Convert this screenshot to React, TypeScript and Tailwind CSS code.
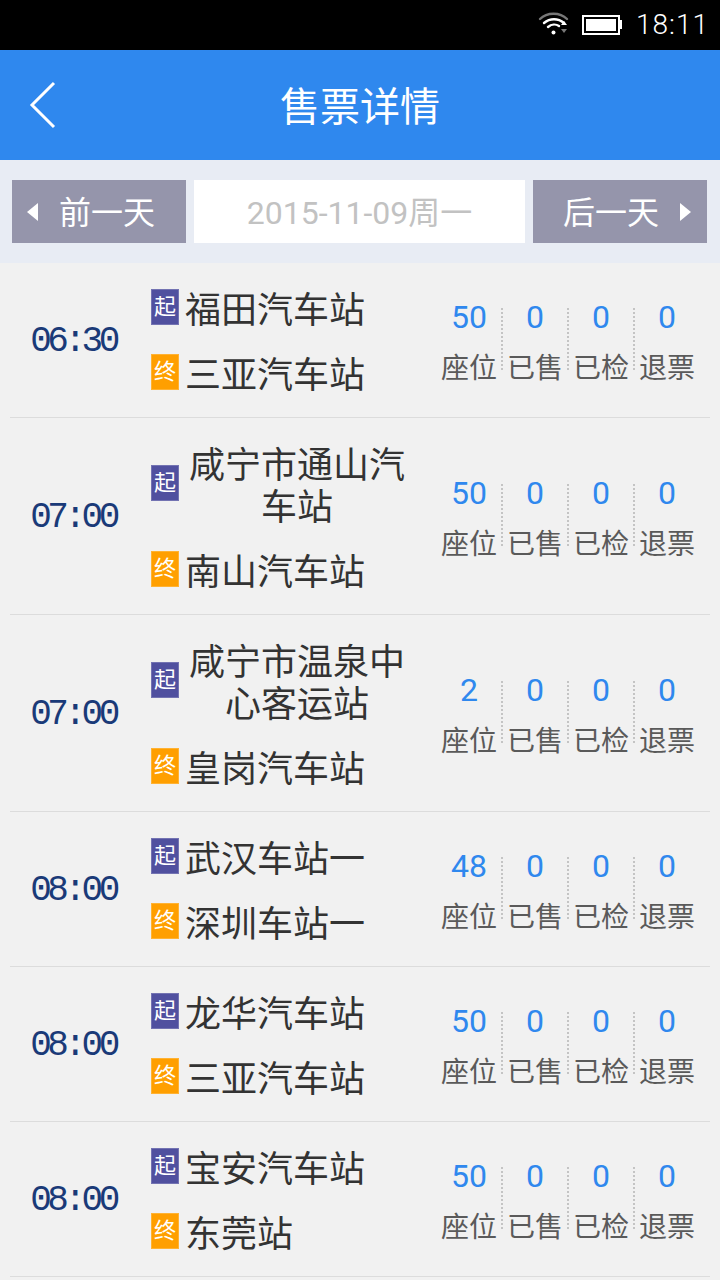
const font = { fontFamily: '"Roboto", "Noto Sans CJK SC", sans-serif' };

interface Trip {
  time: string;
  from: string;
  to: string;
  seats: number;
}

const trips: Trip[] = [
  { time: "06:30", from: "福田汽车站", to: "三亚汽车站", seats: 50 },
  { time: "07:00", from: "咸宁市通山汽车站", to: "南山汽车站", seats: 50 },
  { time: "07:00", from: "咸宁市温泉中心客运站", to: "皇岗汽车站", seats: 2 },
  { time: "08:00", from: "武汉车站一", to: "深圳车站一", seats: 48 },
  { time: "08:00", from: "龙华汽车站", to: "三亚汽车站", seats: 50 },
  { time: "08:00", from: "宝安汽车站", to: "东莞站", seats: 50 },
];

function StatusBar() {
  return (
    <div className="h-[50px] bg-black flex items-center justify-end pr-[11px] text-white">
      <svg width="32" height="26" viewBox="0 0 32 26" className="mr-[12px] mb-[2px]" fill="none" strokeLinecap="round">
        <path d="M2 8 C9 1 22 1 29 8" stroke="#777" strokeWidth="2.4" />
        <path d="M6 12 C12 7 20 7 26 12" stroke="#fff" strokeWidth="2.4" />
        <path d="M10 16 C13.5 13 18 13 21 15" stroke="#fff" strokeWidth="2.4" />
        <circle cx="15.5" cy="21.5" r="2" fill="#fff" />
        <path d="M23 14 l3 -4 l3 4 z" fill="#fff" />
        <path d="M23 18 l3 4 l3 -4 z" fill="#777" />
      </svg>
      <div className="w-[38px] h-[20px] border-2 border-white p-[2px] mb-[1px]">
        <div className="w-full h-full bg-white" />
      </div>
      <div className="w-[2px] h-[9px] bg-white mr-[14px] mb-[1px]" />
      <span className="text-[28px] leading-none font-light tracking-[1px]">18:11</span>
    </div>
  );
}

function Header() {
  return (
    <div className="h-[110px] bg-[#2f88ee] relative flex items-center justify-center">
      <svg width="28" height="48" viewBox="0 0 28 48" className="absolute left-[29px] top-[31px]" fill="none">
        <path d="M25 2 L3 24 L25 46" stroke="#fff" strokeWidth="3" />
      </svg>
      <span className="mt-[6px] text-[40px] leading-none text-white">售票详情</span>
    </div>
  );
}

function DateBar() {
  return (
    <div className="h-[103px] bg-[#e8ecf4] pt-[20px] pl-[12px] flex gap-[8px]">
      <div className="w-[174px] h-[63px] bg-[#9595ab] flex items-center text-white">
        <svg width="12" height="18" viewBox="0 0 12 18" className="ml-[14px]">
          <path d="M12 0 L1 9 L12 18 Z" fill="#fff" />
        </svg>
        <span className="ml-[21px] mt-[2px] text-[32px] leading-none">前一天</span>
      </div>
      <div className="w-[331px] h-[63px] bg-white flex items-center justify-center pt-[2px] text-[32px] leading-none text-[#c2c2c2]">
        2015-11-09周一
      </div>
      <div className="w-[174px] h-[63px] bg-[#9595ab] flex items-center text-white">
        <span className="ml-[30px] mt-[2px] text-[32px] leading-none">后一天</span>
        <svg width="12" height="18" viewBox="0 0 12 18" className="ml-[21px]">
          <path d="M0 0 L11 9 L0 18 Z" fill="#fff" />
        </svg>
      </div>
    </div>
  );
}

function Stop({ kind, name }: { kind: "from" | "to"; name: string }) {
  return (
    <div className="flex items-center">
      <div
        className={`w-[28px] h-[36px] -translate-y-[4px] flex items-center justify-center text-white text-[22px] leading-none border border-white/20 ${
          kind === "from" ? "bg-[#50509f]" : "bg-[#ff9f00]"
        }`}
      >
        {kind === "from" ? "起" : "终"}
      </div>
      <div className="ml-[6px] w-fit max-w-[224px] text-center text-[36px] leading-[42px] text-[#333]">{name}</div>
    </div>
  );
}

function Stat({ value, label, last }: { value: number; label: string; last?: boolean }) {
  return (
    <div className="relative w-[66px] flex flex-col items-center">
      <span className="text-[32px] leading-[38px] text-[#2f88ee]">{value}</span>
      <span className="mt-[14px] text-[28px] leading-[38px] whitespace-nowrap text-[#5a5a5a]">{label}</span>
      {!last && <div className="absolute -right-[1px] top-[10px] h-[62px] border-r-2 border-dotted border-[#c4c4c4]" />}
    </div>
  );
}

function TripRow({ trip }: { trip: Trip }) {
  return (
    <div className="mx-[10px] pt-[21px] pb-[20px] border-b border-[#dcdcdc] flex items-center">
      <div
        className="w-[130px] pr-[4px] pt-[2px] text-center text-[36px] leading-none tracking-[-4.5px] text-[#1a3a78]"
        style={{ fontFamily: '"Liberation Mono", monospace' }}
      >
        {trip.time}
      </div>
      <div className="ml-[11px] mt-[6px] w-[285px] flex flex-col gap-[23px]">
        <Stop kind="from" name={trip.from} />
        <Stop kind="to" name={trip.to} />
      </div>
      <div className="mt-[5px] flex">
        <Stat value={trip.seats} label="座位" />
        <Stat value={0} label="已售" />
        <Stat value={0} label="已检" />
        <Stat value={0} label="退票" last />
      </div>
    </div>
  );
}

export default function App() {
  return (
    <div className="w-[720px] h-[1280px] overflow-hidden bg-[#f1f1f1]" style={font}>
      <StatusBar />
      <Header />
      <DateBar />
      {trips.map((trip, i) => (
        <TripRow key={i} trip={trip} />
      ))}
    </div>
  );
}
